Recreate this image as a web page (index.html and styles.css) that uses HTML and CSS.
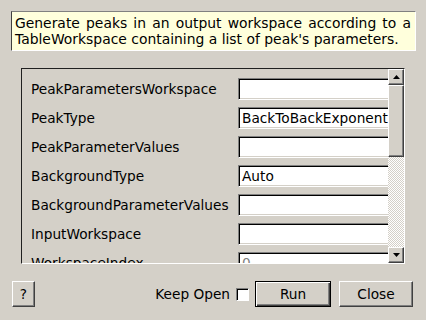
FILE: index.html
```html
<!DOCTYPE html>
<html lang="en">
<head>
    <meta charset="UTF-8">
    <title>GeneratePeaks</title>
    <link rel="stylesheet" href="styles.css">
</head>
<body>
    <div class="dialog">
        <!-- Algorithm summary -->
        <p class="summary">Generate peaks in an output workspace according to a TableWorkspace containing a list of peak's parameters.</p>

        <!-- Property list -->
        <div class="frame">
            <div class="viewport">
                <div class="row"><span class="label">PeakParametersWorkspace</span><span class="field"></span></div>
                <div class="row"><span class="label">PeakType</span><span class="field">BackToBackExponential</span></div>
                <div class="row"><span class="label">PeakParameterValues</span><span class="field"></span></div>
                <div class="row"><span class="label">BackgroundType</span><span class="field">Auto</span></div>
                <div class="row"><span class="label">BackgroundParameterValues</span><span class="field"></span></div>
                <div class="row"><span class="label">InputWorkspace</span><span class="field"></span></div>
                <div class="row"><span class="label">WorkspaceIndex</span><span class="field disabled">0</span></div>
            </div>
            <div class="scrollbar">
                <div class="arrow"><svg width="7" height="4" viewBox="0 0 7 4"><path d="M0 4 L3.5 0 L7 4 Z" fill="#000"/></svg></div>
                <div class="thumb"></div>
                <div class="trough"></div>
                <div class="arrow"><svg width="7" height="4" viewBox="0 0 7 4"><path d="M0 0 L3.5 4 L7 0 Z" fill="#000"/></svg></div>
            </div>
        </div>

        <!-- Buttons -->
        <div class="buttons">
            <button class="btn help">?</button>
            <span class="spacer"></span>
            <label class="keep">Keep Open <span class="check"></span></label>
            <button class="btn run">Run</button>
            <button class="btn close">Close</button>
        </div>
    </div>
</body>
</html>
```

FILE: styles.css
```css
/* General */
body {
    margin: 0;
    background-color: #d4d0c8;
    font-family: "DejaVu Sans", sans-serif;
    font-size: 13.7px;
    color: #000;
    overflow: hidden;
}

.dialog {
    width: 426px;
    height: 320px;
}

/* Summary box */
.summary {
    margin: 11px 10px 0 11px;
    height: 40px;
    box-sizing: border-box;
    padding: 3px 4px 0 3px;
    font-size: 13.9px;
    line-height: 16px;
    text-align: justify;
    background-color: #ffffdc;
    border-top: 1px solid #808080;
    border-left: 1px solid #404040;
    border-bottom: 1px solid #ffffff;
    border-right: 1px solid #ffffff;
}

/* Property frame */
.frame {
    display: flex;
    margin: 17px 0 0 21px;
    width: 384px;
    height: 196px;
    box-sizing: border-box;
    border-top: 1px solid #202020;
    border-left: 1px solid #202020;
    border-bottom: 1px solid #ffffff;
    border-right: 1px solid #ffffff;
}

.viewport {
    flex: 1;
    overflow: hidden;
    padding: 9px 0 0 9px;
    display: flex;
    flex-direction: column;
    gap: 7px;
}

.row {
    display: flex;
    align-items: center;
    height: 22px;
    flex-shrink: 0;
}

.label {
    width: 207px;
    flex-shrink: 0;
    white-space: nowrap;
}

.field {
    width: 170px;
    height: 22px;
    flex-shrink: 0;
    box-sizing: border-box;
    padding: 2px 3px;
    line-height: 16px;
    white-space: nowrap;
    overflow: hidden;
    background-color: #ffffff;
    border-top: 1px solid #808080;
    border-left: 1px solid #808080;
    border-bottom: 1px solid #ffffff;
    border-right: 1px solid #ffffff;
    box-shadow: inset 1px 1px 0 #000, inset -1px -1px 0 #d4d0c8;
}

.field.disabled {
    color: #808080;
}

/* Scrollbar */
.scrollbar {
    width: 16px;
    display: flex;
    flex-direction: column;
}

.arrow, .thumb {
    box-sizing: border-box;
    background-color: #d4d0c8;
    border-top: 1px solid #ffffff;
    border-left: 1px solid #ffffff;
    border-bottom: 1px solid #404040;
    border-right: 1px solid #404040;
    box-shadow: inset -1px -1px 0 #808080;
}

.arrow {
    height: 16px;
    display: flex;
    align-items: center;
    justify-content: center;
}

.thumb {
    height: 72px;
}

.trough {
    flex: 1;
    background: repeating-conic-gradient(#d4d0c8 0 25%, #ffffff 0 50%) 0 0 / 2px 2px;
}

/* Button row */
.buttons {
    display: flex;
    align-items: center;
    margin: 17px 13px 0 12px;
}

.spacer {
    flex: 1;
}

.btn {
    height: 26px;
    box-sizing: border-box;
    font-family: inherit;
    font-size: inherit;
    color: #000;
    background-color: #d4d0c8;
    border-top: 1px solid #ffffff;
    border-left: 1px solid #ffffff;
    border-bottom: 1px solid #404040;
    border-right: 1px solid #404040;
    box-shadow: inset -1px -1px 0 #808080;
    padding: 0;
}

.help {
    width: 23px;
}

.run {
    width: 76px;
    margin-left: 6px;
    border: 1px solid #000;
    box-shadow: inset 1px 1px 0 #ffffff, inset -1px -1px 0 #404040, inset -2px -2px 0 #808080;
}

.close {
    width: 74px;
    margin-left: 8px;
}

.keep {
    display: flex;
    align-items: center;
    gap: 6px;
}

.check {
    width: 13px;
    height: 13px;
    box-sizing: border-box;
    background-color: #ffffff;
    border-top: 1px solid #808080;
    border-left: 1px solid #808080;
    border-bottom: 1px solid #ffffff;
    border-right: 1px solid #ffffff;
    box-shadow: inset 1px 1px 0 #000;
}
```
